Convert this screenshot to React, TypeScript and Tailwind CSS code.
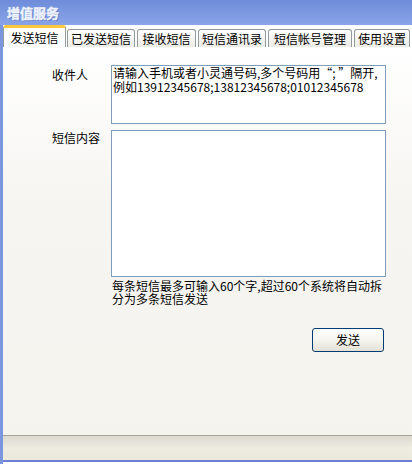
import React from "react";

const tabs = [
  { label: "发送短信", w: "w-[63px]", active: true },
  { label: "已发送短信", w: "w-[68px]" },
  { label: "接收短信", w: "w-[59px]" },
  { label: "短信通讯录", w: "w-[68px]" },
  { label: "短信帐号管理", w: "w-[84px]" },
  { label: "使用设置", w: "w-[56px]" },
];

function Tab({ label, w, active }: { label: string; w: string; active?: boolean }) {
  if (active) {
    return (
      <div
        className={`${w} h-[22px] -mr-[1px] relative z-10 flex items-start justify-center pt-[3px] bg-white border-x border-[#919b9c] border-t-[3px] border-t-[#ffc83c] rounded-t-[3px] text-black`}
      >
        {label}
      </div>
    );
  }
  return (
    <div
      className={`${w} h-[18px] flex items-center justify-center bg-gradient-to-b from-white to-[#ecebe6] border-x border-t border-[#919b9c] rounded-t-[3px] text-black`}
    >
      {label}
    </div>
  );
}

export default function App() {
  return (
    <div className="w-[412px] h-[464px] flex flex-col overflow-hidden bg-white text-[12px] leading-[14px] font-['Noto_Sans_CJK_SC','Noto_Sans',sans-serif]">
      <div className="h-[25px] shrink-0 flex items-center pl-[7px] bg-gradient-to-b from-[#6e8cd9] to-[#89a4e8] text-[13px] font-bold text-[#eef2fd] [-webkit-text-stroke:0.5px_#eef2fd] [text-shadow:1px_1px_0_#5b76c0]">
        增值服务
      </div>

      <div className="flex-1 flex border-l-[3px] border-[#7a96df]">
        <div className="flex-1 flex flex-col">
          <div className="h-[22px] shrink-0 flex items-end gap-[2px] bg-white">
            {tabs.map((t) => (
              <Tab key={t.label} {...t} />
            ))}
          </div>

          <div className="flex-1 flex flex-col pt-[18px] pl-[49px] bg-gradient-to-b from-white via-[#f6f5f1] via-40% to-[#f4f3ee]">
            <div className="flex">
              <div className="w-[59px] pt-[3px] text-black">收件人</div>
              <div className="w-[275px] h-[59px] bg-white border border-[#7f9db9] px-[1px] text-black">
                <div>请输入手机或者小灵通号码,多个号码用“; ”隔开,</div>
                <div>例如13912345678;13812345678;01012345678</div>
              </div>
            </div>

            <div className="flex mt-[6px]">
              <div className="w-[59px] pt-[1px] text-black">短信内容</div>
              <div className="w-[275px] h-[147px] bg-white border border-[#7f9db9]" />
            </div>

            <div className="ml-[60px] mt-[2px] w-[274px] leading-[13px] text-black">
              每条短信最多可输入60个字,超过60个系统将自动拆
              <br />
              分为多条短信发送
            </div>

            <div className="ml-[260px] mt-[23px] w-[72px] h-[24px] flex items-center justify-center rounded-[3px] border border-[#003c74] bg-gradient-to-b from-white via-[#f5f4ef] to-[#e3e1d6] text-black">
              发送
            </div>
          </div>

          <div className="h-[1px] shrink-0 bg-[#a4a49c]" />
          <div className="h-[24px] shrink-0 bg-gradient-to-b from-[#dcdad0] via-[#eeece1] to-[#ebe9dc]" />
          <div className="h-[2px] shrink-0 bg-[#6f7fd6]" />
          <div className="h-[2px] shrink-0 bg-white" />
        </div>
      </div>
    </div>
  );
}
